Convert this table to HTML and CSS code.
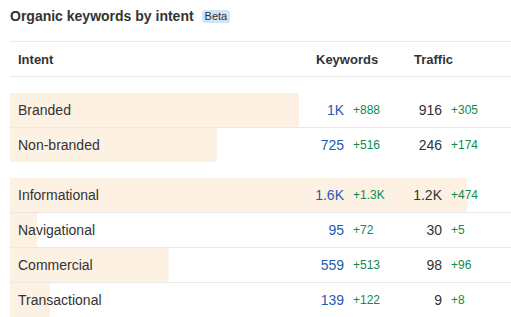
FILE: index.html
```html
<!DOCTYPE html>
<html>
<head>
<meta charset="utf-8">
<link rel="stylesheet" href="styles.css">
</head>
<body>
<div class="widget">
  <div class="title-row">
    <h2 class="title">Organic keywords by intent</h2>
    <span class="badge">Beta</span>
  </div>
  <div class="table">
    <div class="row head">
      <div class="c-name">Intent</div>
      <div class="c-kw-head">Keywords</div>
      <div class="c-tr-head">Traffic</div>
    </div>
    <div class="group">
      <div class="row" style="background-size:57.7% 100%">
        <div class="c-name">Branded</div>
        <div class="val kw">1K</div><div class="delta">+888</div>
        <div class="val">916</div><div class="delta">+305</div>
      </div>
      <div class="row" style="background-size:41.3% 100%">
        <div class="c-name">Non-branded</div>
        <div class="val kw">725</div><div class="delta">+516</div>
        <div class="val">246</div><div class="delta">+174</div>
      </div>
    </div>
    <div class="group">
      <div class="row" style="background-size:91.2% 100%">
        <div class="c-name">Informational</div>
        <div class="val kw">1.6K</div><div class="delta">+1.3K</div>
        <div class="val">1.2K</div><div class="delta">+474</div>
      </div>
      <div class="row" style="background-size:5.4% 100%">
        <div class="c-name">Navigational</div>
        <div class="val kw">95</div><div class="delta">+72</div>
        <div class="val">30</div><div class="delta">+5</div>
      </div>
      <div class="row" style="background-size:31.7% 100%">
        <div class="c-name">Commercial</div>
        <div class="val kw">559</div><div class="delta">+513</div>
        <div class="val">98</div><div class="delta">+96</div>
      </div>
      <div class="row" style="background-size:8% 100%">
        <div class="c-name">Transactional</div>
        <div class="val kw">139</div><div class="delta">+122</div>
        <div class="val">9</div><div class="delta">+8</div>
      </div>
    </div>
  </div>
</div>
</body>
</html>
```

FILE: styles.css
```css
* { box-sizing: border-box; }
html, body { margin: 0; padding: 0; background: #fff; }
body {
  font-family: "Liberation Sans", Arial, sans-serif;
  color: #333;
  overflow: hidden;
}
.widget { padding-left: 10px; }
.title-row {
  display: flex;
  align-items: center;
  height: 41px;
  padding-bottom: 9px;
  gap: 8px;
}
.title {
  margin: 0;
  font-size: 14px;
  font-weight: bold;
  color: #333;
}
.badge {
  font-size: 11px;
  line-height: 13px;
  padding: 0 3px;
  background: #d2e3f6;
  border-radius: 3px;
  color: #333;
}
.table { width: 501px; }
.row {
  display: grid;
  grid-template-columns: 290px 44px 56px 42px 69px;
  align-items: center;
  height: 35px;
  border-bottom: 1px solid #e8e8e8;
  font-size: 14px;
  background-image: linear-gradient(#fdf1e4, #fdf1e4);
  background-repeat: no-repeat;
  background-size: 0 100%;
  background-position: 0 0;
}
.row.head {
  border-top: 1px solid #e8e8e8;
  height: 36px;
  font-size: 13px;
  font-weight: bold;
  background: none;
}
.group { margin-top: 16px; }
.group .row:last-child { border-bottom: none; height: 34px; }
.c-name { padding-left: 8px; }
.c-kw-head { grid-column: 2 / 4; padding-left: 16px; }
.c-tr-head { grid-column: 4 / 6; padding-left: 14px; }
.val { text-align: right; color: #333; }
.val.kw { color: #1c5bb6; }
.delta {
  padding-left: 9px;
  font-size: 12px;
  color: #0f8a50;
}
```
